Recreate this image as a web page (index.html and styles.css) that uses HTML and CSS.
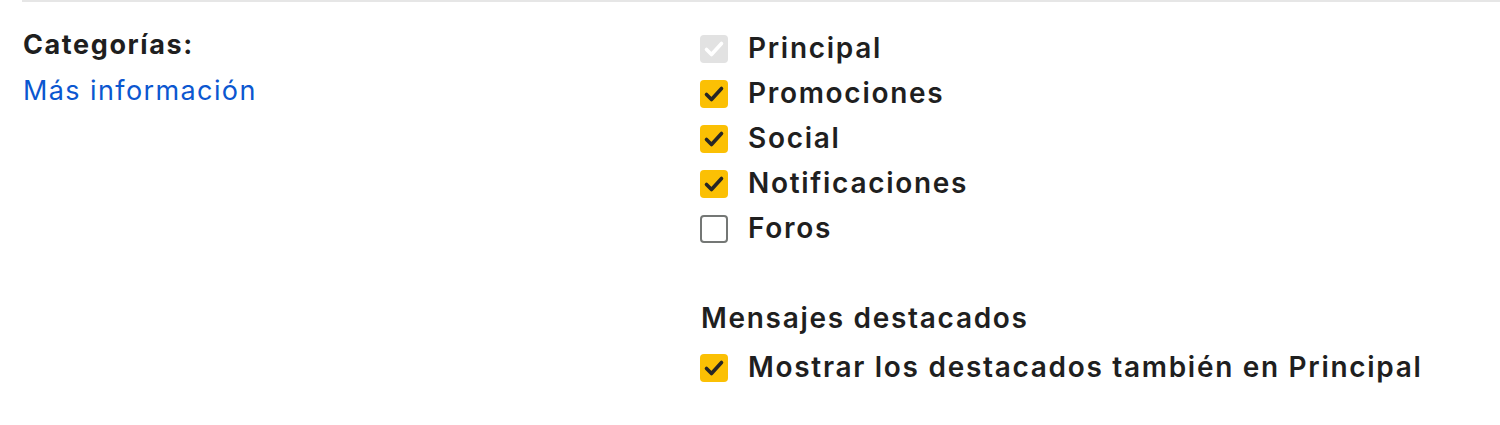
FILE: index.html
```html
<!DOCTYPE html>
<html lang="es">
<head>
<meta charset="utf-8">
<title>Categorías</title>
<link rel="stylesheet" href="styles.css">
</head>
<body>
<div class="section">
  <div class="label-col">
    <div class="label">Categorías:</div>
    <a class="link" href="#">Más información</a>
  </div>
  <div class="options">
    <div class="row"><span class="box disabled"><svg viewBox="0 0 28 28"><path d="M6.5 14.5l5 5 10-11" /></svg></span><span class="text">Principal</span></div>
    <div class="row"><span class="box checked"><svg viewBox="0 0 28 28"><path d="M6.5 14.5l5 5 10-11" /></svg></span><span class="text">Promociones</span></div>
    <div class="row"><span class="box checked"><svg viewBox="0 0 28 28"><path d="M6.5 14.5l5 5 10-11" /></svg></span><span class="text">Social</span></div>
    <div class="row"><span class="box checked"><svg viewBox="0 0 28 28"><path d="M6.5 14.5l5 5 10-11" /></svg></span><span class="text">Notificaciones</span></div>
    <div class="row"><span class="box unchecked"></span><span class="text">Foros</span></div>
    <div class="heading">Mensajes destacados</div>
    <div class="row"><span class="box checked"><svg viewBox="0 0 28 28"><path d="M6.5 14.5l5 5 10-11" /></svg></span><span class="text">Mostrar los destacados también en Principal</span></div>
  </div>
</div>
</body>
</html>
```
FILE: styles.css
```css
html, body {
  margin: 0;
  padding: 0;
  background: #ffffff;
}
body {
  font-family: Inter, "Noto Sans", sans-serif;
  color: #1f1f1f;
}
.section {
  display: flex;
  margin-left: 22px;
  border-top: 2px solid #e6e6e6;
  padding-top: 24px;
}
.label-col {
  width: 677px;
  padding-left: 1px;
  display: flex;
  flex-direction: column;
}
.label {
  font-size: 27px;
  font-weight: 700;
  letter-spacing: 1.6px;
  line-height: 44px;
  margin-top: -3px;
}
.link {
  font-size: 27px;
  font-weight: 400;
  letter-spacing: 1.4px;
  line-height: 44px;
  margin-top: 2px;
  color: #0b57d0;
  text-decoration: none;
}
.options {
  display: flex;
  flex-direction: column;
}
.row {
  display: flex;
  align-items: center;
  height: 45px;
  gap: 20px;
}
.box {
  flex: none;
  width: 28px;
  height: 28px;
  box-sizing: border-box;
  border-radius: 4px;
  display: flex;
  align-items: center;
  justify-content: center;
}
.box svg {
  width: 28px;
  height: 28px;
  fill: none;
  stroke-width: 3.6;
  stroke-linecap: round;
  stroke-linejoin: round;
}
.checked {
  background: #fbc004;
}
.checked svg {
  stroke: #262626;
}
.disabled {
  background: #e2e2e2;
}
.disabled svg {
  stroke: #ffffff;
}
.unchecked {
  border: 2px solid #747775;
}
.text {
  font-size: 28px;
  font-weight: 600;
  letter-spacing: 1.7px;
  line-height: 45px;
}
.heading {
  font-size: 28px;
  font-weight: 600;
  letter-spacing: 1.7px;
  line-height: 45px;
  margin-top: 45px;
  padding-left: 1px;
  margin-bottom: 4px;
}
```
